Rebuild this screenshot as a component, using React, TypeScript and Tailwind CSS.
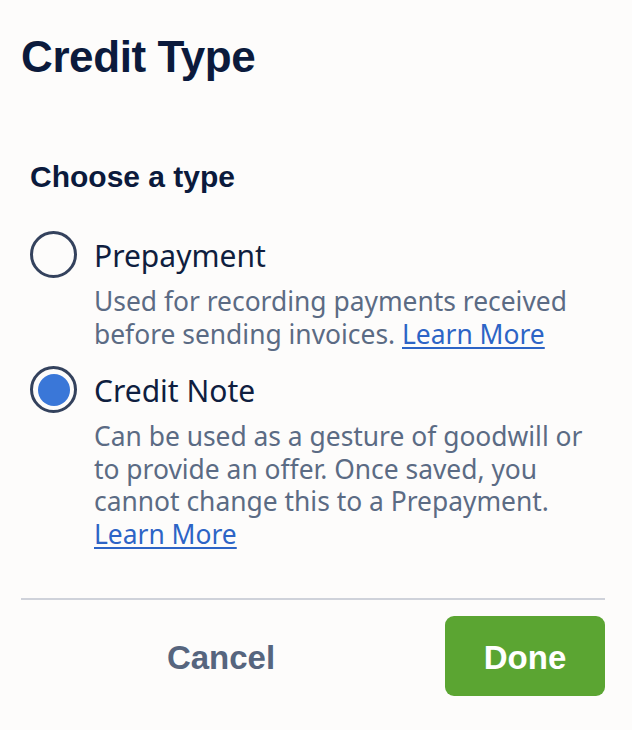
import React from "react";

type CreditOption = {
  id: string;
  label: string;
  description: string;
};

const options: CreditOption[] = [
  {
    id: "prepayment",
    label: "Prepayment",
    description: "Used for recording payments received before sending invoices.",
  },
  {
    id: "credit-note",
    label: "Credit Note",
    description:
      "Can be used as a gesture of goodwill or to provide an offer. Once saved, you cannot change this to a Prepayment.",
  },
];

function Radio({ checked }: { checked: boolean }) {
  return (
    <span className="flex h-[47px] w-[47px] shrink-0 items-center justify-center rounded-full border-[3.5px] border-[#34425d]">
      {checked && <span className="h-[32px] w-[32px] rounded-full bg-[#3a77d8]" />}
    </span>
  );
}

export default function App() {
  const [selected, setSelected] = React.useState("credit-note");

  return (
    <div className="h-[730px] w-full bg-[#fdfcfb] pl-[21px] pr-[27px] pt-[35px] font-['Noto_Sans',sans-serif]">
      <h1 className="font-['Liberation_Sans',Arial,sans-serif] text-[44px] font-bold leading-none tracking-[-0.4px] text-[#0b1a3c]">
        Credit Type
      </h1>

      <div className="mt-[83px] pl-[9px]">
        <h2 className="font-['Liberation_Sans',Arial,sans-serif] text-[30px] font-bold leading-none text-[#0b1a3c]">
          Choose a type
        </h2>

        <div className="mt-[39px] flex flex-col gap-[16px]">
          {options.map((opt) => (
            <label
              key={opt.id}
              className="flex cursor-pointer items-start gap-[17px]"
              onClick={() => setSelected(opt.id)}
            >
              <Radio checked={selected === opt.id} />
              <div className="flex flex-col">
                <div className="flex h-[47px] items-center pt-[2px] text-[30px] leading-[36px] text-[#0f1e3f]">
                  {opt.label}
                </div>
                <p className="mt-[7px] max-w-[505px] text-[26.4px] leading-[32.5px] text-[#5b6b84]">
                  {opt.description}{" "}
                  <a href="#" className="text-[#2d64c6] underline underline-offset-[3px]">
                    Learn More
                  </a>
                </p>
              </div>
            </label>
          ))}
        </div>
      </div>

      <div className="mt-[48px] h-[2px] bg-[#cfd2da]" />

      <div className="mt-[16px] flex gap-[24px]">
        <button className="flex-1 pt-[4px] font-['Liberation_Sans',Arial,sans-serif] text-[33px] font-bold text-[#56657e]">
          Cancel
        </button>
        <button className="h-[80px] w-[160px] rounded-[9px] bg-[#5ba532] pt-[4px] font-['Liberation_Sans',Arial,sans-serif] text-[33px] font-bold text-white">
          Done
        </button>
      </div>
    </div>
  );
}
